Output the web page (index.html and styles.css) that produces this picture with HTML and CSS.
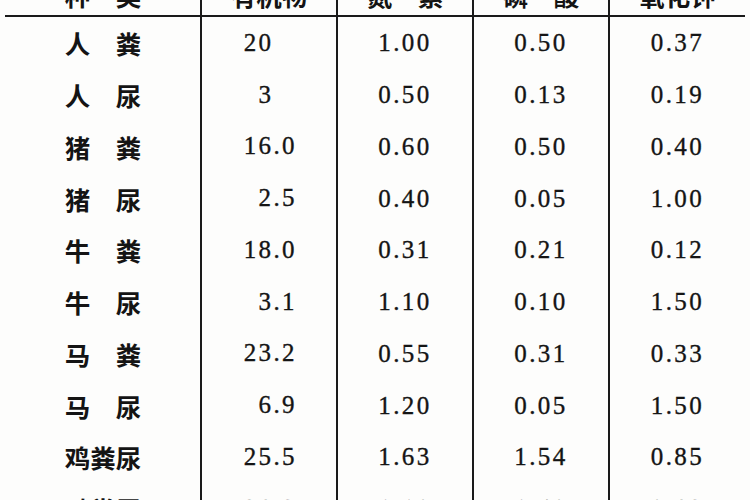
FILE: index.html
```html
<!DOCTYPE html>
<html lang="zh">
<head>
<meta charset="utf-8">
<title>粪尿养分含量</title>
<link rel="stylesheet" href="styles.css">
</head>
<body>
<div class="table">
  <div class="row head">
    <div class="c name">种　类</div>
    <div class="c h">有机物</div>
    <div class="c h">氮　素</div>
    <div class="c h">磷　酸</div>
    <div class="c h">氧化钾</div>
  </div>
  <div class="row"><div class="c name">人　粪</div><div class="c org">20<span class="ph">.0</span></div><div class="c num">1.00</div><div class="c num">0.50</div><div class="c num">0.37</div></div>
  <div class="row"><div class="c name">人　尿</div><div class="c org">3<span class="ph">.0</span></div><div class="c num">0.50</div><div class="c num">0.13</div><div class="c num">0.19</div></div>
  <div class="row"><div class="c name">猪　粪</div><div class="c org">16.0</div><div class="c num">0.60</div><div class="c num">0.50</div><div class="c num">0.40</div></div>
  <div class="row"><div class="c name">猪　尿</div><div class="c org">2.5</div><div class="c num">0.40</div><div class="c num">0.05</div><div class="c num">1.00</div></div>
  <div class="row"><div class="c name">牛　粪</div><div class="c org">18.0</div><div class="c num">0.31</div><div class="c num">0.21</div><div class="c num">0.12</div></div>
  <div class="row"><div class="c name">牛　尿</div><div class="c org">3.1</div><div class="c num">1.10</div><div class="c num">0.10</div><div class="c num">1.50</div></div>
  <div class="row"><div class="c name">马　粪</div><div class="c org">23.2</div><div class="c num">0.55</div><div class="c num">0.31</div><div class="c num">0.33</div></div>
  <div class="row"><div class="c name">马　尿</div><div class="c org">6.9</div><div class="c num">1.20</div><div class="c num">0.05</div><div class="c num">1.50</div></div>
  <div class="row"><div class="c name">鸡粪尿</div><div class="c org">25.5</div><div class="c num">1.63</div><div class="c num">1.54</div><div class="c num">0.85</div></div>
  <div class="row"><div class="c name">鸭粪尿</div><div class="c org">26.2</div><div class="c num">1.10</div><div class="c num">1.40</div><div class="c num">0.62</div></div>
</div>
</body>
</html>
```
FILE: styles.css
```css
html, body {
  margin: 0;
  padding: 0;
  background: #fdfdfc;
  overflow: hidden;
  width: 750px;
  height: 500px;
}
.table {
  margin-top: -27px;
  margin-left: 5px;
  width: 740px;
  color: #141414;
}
.row {
  display: grid;
  grid-template-columns: 195px 136px 136px 136px 137px;
  height: 51.75px;
}
.row.head {
  height: 44px;
  border-bottom: 2px solid #1a1a1a;
  box-sizing: border-box;
}
.c {
  display: flex;
  align-items: center;
  justify-content: center;
  border-left: 2px solid #1a1a1a;
  font-family: "Liberation Serif", "Times New Roman", serif;
  font-size: 25px;
  letter-spacing: 2.4px;
  -webkit-text-stroke: 0.35px #141414;
}
.c.name {
  border-left: none;
  font-family: "Noto Sans CJK SC", "Noto Sans", sans-serif;
  font-weight: 700;
  font-size: 25.5px;
  letter-spacing: 0;
  padding-left: 1px;
  -webkit-text-stroke: 0;
}
.c.h {
  font-family: "Noto Sans CJK SC", "Noto Sans", sans-serif;
  font-weight: 700;
  font-size: 25.5px;
  letter-spacing: 0;
  -webkit-text-stroke: 0;
}
.c.org {
  justify-content: flex-end;
  padding-right: 39px;
}
.c.num {
  padding-top: 1px;
}
.ph {
  visibility: hidden;
}
```
